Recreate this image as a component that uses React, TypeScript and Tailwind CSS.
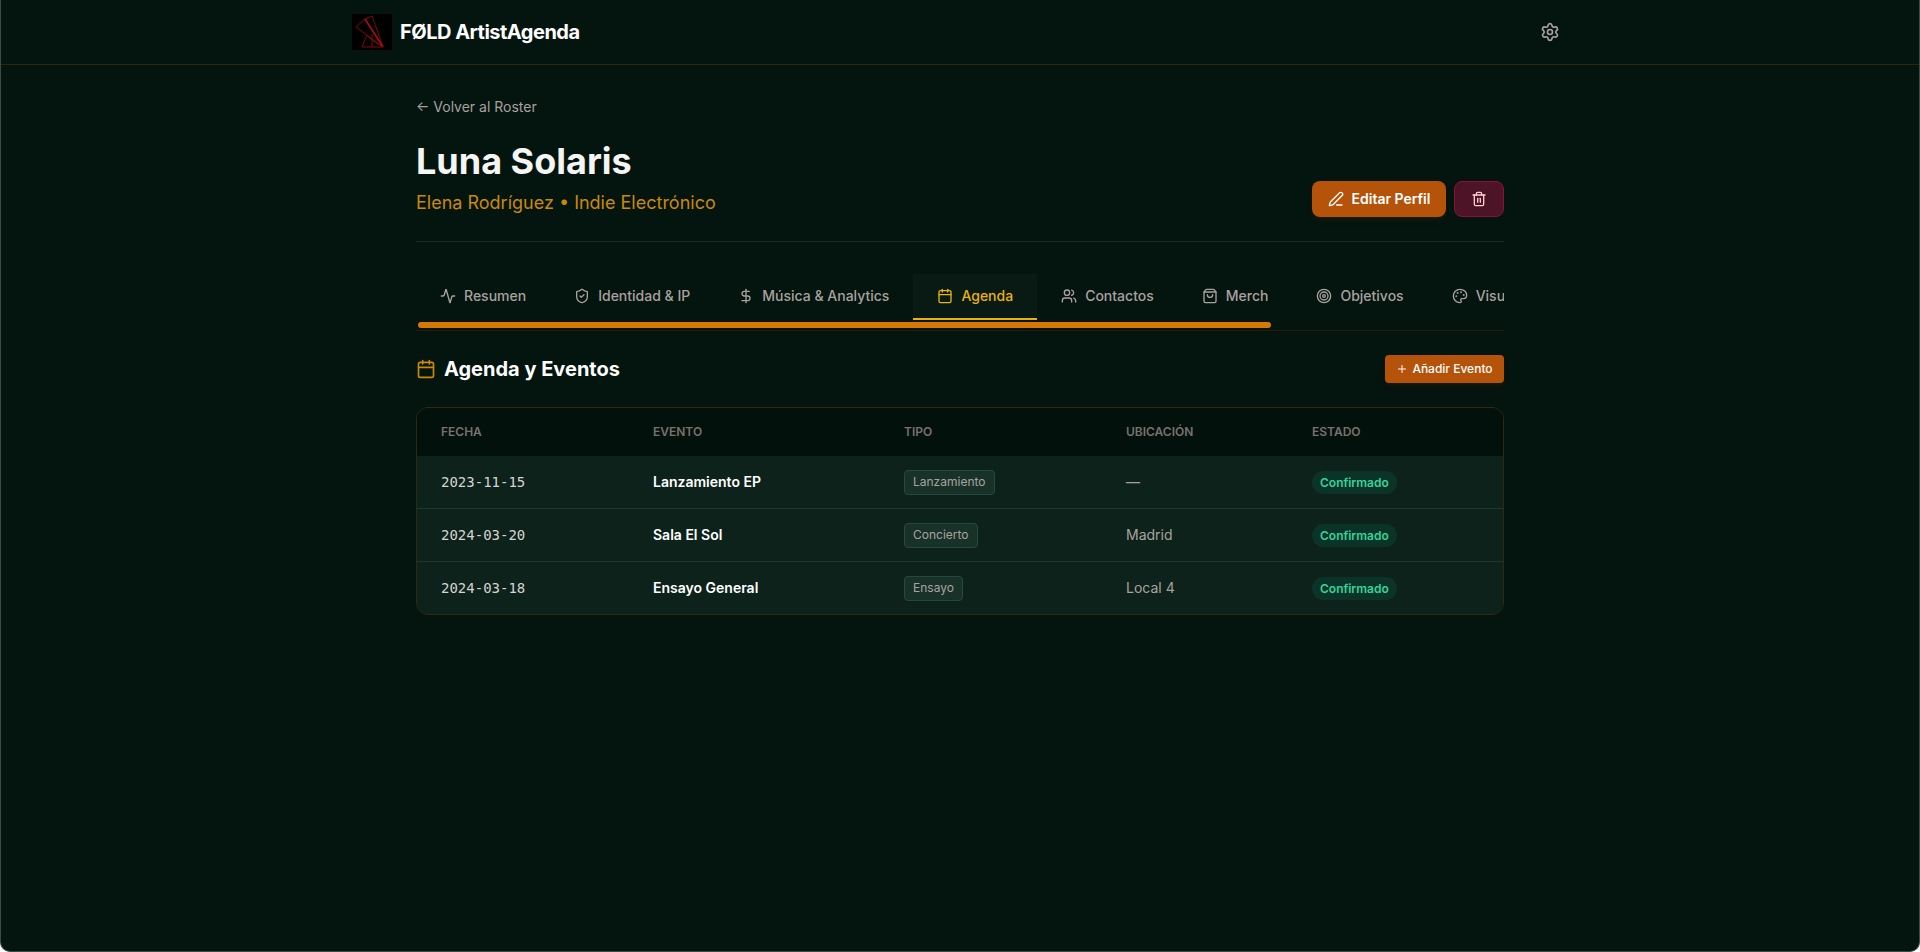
import { Activity, Calendar, DollarSign, Palette, PenLine, Plus, Settings, ShieldCheck, ShoppingBag, Target, Trash2, Users } from "lucide-react";

const tabs = [
  { label: "Resumen", icon: Activity },
  { label: "Identidad & IP", icon: ShieldCheck },
  { label: "Música & Analytics", icon: DollarSign },
  { label: "Agenda", icon: Calendar, active: true },
  { label: "Contactos", icon: Users },
  { label: "Merch", icon: ShoppingBag },
  { label: "Objetivos", icon: Target },
  { label: "Visual", icon: Palette },
];

const events = [
  { date: "2023-11-15", name: "Lanzamiento EP", type: "Lanzamiento", place: "—" },
  { date: "2024-03-20", name: "Sala El Sol", type: "Concierto", place: "Madrid" },
  { date: "2024-03-18", name: "Ensayo General", type: "Ensayo", place: "Local 4" },
];

function Logo() {
  return (
    <svg viewBox="0 0 40 36" className="w-10 h-9 bg-black shrink-0" fill="none" stroke="#7f0909" strokeWidth="1">
      <path d="M4 13 L13 5 L20 2 L31 33 Z" />
      <path d="M13 5 L31 33" stroke="#b00d0d" strokeWidth="1.5" />
      <path d="M15 21 L10 33 L31 33 L20 26 L15 21" />
      <path d="M20 20 L20 33" />
    </svg>
  );
}

export default function App() {
  return (
    <div className="min-h-[952px] bg-[#04140f] border-x border-b border-[#3a4a44] rounded-b-[10px] font-['Inter',sans-serif] overflow-hidden">
      <header className="border-b border-[#33240f] h-[65px]">
        <div className="max-w-7xl mx-auto px-8 h-full flex items-center justify-between">
          <div className="flex items-center gap-2">
            <Logo />
            <span className="text-xl font-bold text-white tracking-tight">FØLD ArtistAgenda</span>
          </div>
          <button className="p-2 text-[#a8a29e]">
            <Settings className="w-5 h-5" />
          </button>
        </div>
      </header>

      <main className="max-w-6xl mx-auto px-8 pt-8">
        <button className="block text-sm text-[#a8a29e] mb-6">← Volver al Roster</button>

        <div className="flex items-end justify-between border-b border-[#1c2a24] pb-6 mb-8">
          <div>
            <h1 className="text-4xl font-bold text-[#f5f5f4] mb-2">Luna Solaris</h1>
            <p className="text-lg text-[#ca8a04]">Elena Rodríguez • Indie Electrónico</p>
          </div>
          <div className="flex items-center gap-2">
            <button className="h-9 w-[134px] flex items-center justify-center gap-2 rounded-lg bg-[#b45309] text-white text-sm font-semibold shadow-md shadow-[#b45309]/10">
              <PenLine className="w-4 h-4" /> Editar Perfil
            </button>
            <button className="h-9 w-[50px] flex items-center justify-center rounded-lg bg-[#4c1426] border border-[#881337] text-[#fecdd3]">
              <Trash2 className="w-4 h-4" />
            </button>
          </div>
        </div>

        <div className="relative border-b border-[#2a1c0c] mb-6 h-[57px] overflow-hidden">
          <div className="flex">
            {tabs.map((tab) => (
              <button
                key={tab.label}
                className={`flex items-center gap-2 px-6 h-[46px] text-sm font-medium whitespace-nowrap shrink-0 border-b-2 ${
                  tab.active ? "text-[#eab308] border-[#eab308] bg-[#091913]" : "text-[#a8a29e] border-transparent"
                }`}
              >
                <tab.icon className="w-4 h-4" />
                {tab.label}
              </button>
            ))}
          </div>
          <div className="absolute left-[2px] top-[48px] w-[853px] h-[6px] rounded-full bg-[#d97706]" />
        </div>

        <div className="flex items-center justify-between mb-6">
          <h2 className="flex items-center gap-2 text-xl font-bold text-white">
            <Calendar className="w-5 h-5 text-[#ca8a04]" /> Agenda y Eventos
          </h2>
          <button className="h-7 w-[119px] flex items-center justify-center gap-1 rounded bg-[#b45309] text-white text-xs font-medium shadow-md shadow-[#b45309]/10">
            <Plus className="w-3 h-3" /> Añadir Evento
          </button>
        </div>

        <div className="rounded-xl border border-[#33280f] overflow-hidden">
          <table className="w-full text-left table-fixed">
            <thead className="bg-[#03110c]">
              <tr className="h-[48px] text-xs font-semibold text-[#78716c]">
                <th className="w-[212px] pl-6 font-semibold">FECHA</th>
                <th className="w-[251px] pl-6 font-semibold">EVENTO</th>
                <th className="w-[222px] pl-6 font-semibold">TIPO</th>
                <th className="w-[186px] pl-6 font-semibold">UBICACIÓN</th>
                <th className="pl-6 font-semibold">ESTADO</th>
              </tr>
            </thead>
            <tbody className="bg-[#0d221b]">
              {events.map((ev) => (
                <tr key={ev.date} className="h-[53px] first:h-[52px] border-t first:border-t-0 border-[#1a3a2e]">
                  <td className="pl-6 text-sm text-[#d6d3d1] font-['DejaVu_Sans_Mono',monospace]">{ev.date}</td>
                  <td className="pl-6 text-sm font-semibold text-white">{ev.name}</td>
                  <td className="pl-6">
                    <span className="inline-flex items-center align-middle h-[25px] px-2 rounded text-xs text-[#a8a29e] bg-[#183229] border border-[#234a3a]">{ev.type}</span>
                  </td>
                  <td className="pl-6 text-sm text-[#a8a29e]">{ev.place}</td>
                  <td className="pl-6">
                    <span className="inline-flex items-center align-middle h-[23px] px-2 rounded-full text-xs font-semibold text-[#34d399] bg-[#0b3327]">Confirmado</span>
                  </td>
                </tr>
              ))}
            </tbody>
          </table>
        </div>
      </main>
    </div>
  );
}
